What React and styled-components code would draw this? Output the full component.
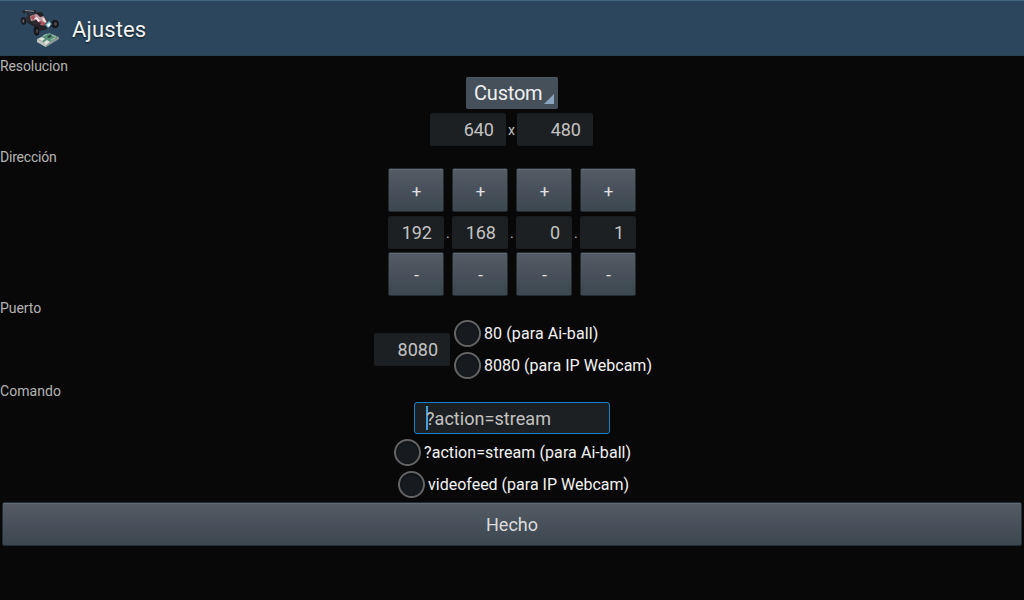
import React from 'react';
import styled, { createGlobalStyle } from 'styled-components';

const Global = createGlobalStyle`
  * { box-sizing: border-box; }
  body { margin: 0; background: #080808; font-family: Roboto, sans-serif; overflow: hidden; }
`;

const Screen = styled.div`
  display: flex;
  flex-direction: column;
  width: 1024px;
  height: 600px;
  background: #080808;
  color: #bebebe;
`;

const ActionBar = styled.header`
  display: flex;
  align-items: flex-start;
  height: 56px;
  padding: 2px 0 0 16px;
  background: #2c475d;
  border-top: 1px solid #436782;
  border-bottom: 1px solid #294355;
`;

const Title = styled.h1`
  margin: 13px 0 0 8px;
  font-size: 22px;
  line-height: 28px;
  font-weight: 400;
  letter-spacing: 0.15px;
  color: #f3f3f3;
  text-shadow: 0 1px 2px #0a141c;
`;

const Section = styled.section`
  display: flex;
  flex-direction: column;
  align-items: center;
  height: ${(p) => p.$height}px;
`;

const Label = styled.h2`
  align-self: flex-start;
  margin: 0;
  height: 19px;
  font-size: 14px;
  line-height: 20px;
  font-weight: 400;
  letter-spacing: ${(p) => p.$spacing || 0}px;
  color: #b4b4b4;
`;

const Spinner = styled.button`
  display: flex;
  align-items: center;
  justify-content: space-between;
  width: 92px;
  height: 32px;
  margin: 2px 0 4px;
  padding: 0 4px 0 8px;
  border: 1px solid #505a64;
  border-width: 1px 0 0;
  border-radius: 2px;
  background: #46505a;
  color: #f0f0f0;
  font: 400 20px/30px Roboto, sans-serif;
`;

const SpinnerText = styled.span`
  letter-spacing: -0.2px;
  padding-bottom: 2px;
  line-height: 28px;
`;

const Corner = styled.svg`
  align-self: flex-end;
  margin-bottom: 5px;
  flex: none;
`;

const Row = styled.div`
  display: flex;
  align-items: center;
  width: 164px;
`;

const Field = styled.div`
  flex: none;
  width: ${(p) => p.$width}px;
  height: 33px;
  padding-right: 12px;
  border-radius: 2px;
  background: #1d2022;
  border: 1px solid #191c1e;
  border-width: 1px 0;
  color: #c3c3c3;
  font-size: 18px;
  line-height: 32px;
  text-align: right;
`;

const Times = styled.span`
  width: 11px;
  font-size: 14px;
  line-height: 20px;
  text-align: center;
`;

const Address = styled.div`
  display: flex;
  margin-top: 2px;
`;

const Octet = styled.div`
  display: flex;
  flex-direction: column;
  width: 56px;
`;

const Dot = styled.span`
  width: 8px;
  padding: 55px 0 0 2px;
  font-size: 14px;
  line-height: 20px;
`;

const Button = styled.button`
  height: 44px;
  margin: 0;
  padding: 2px 0 0;
  border: 1px solid #242c34;
  border-radius: 2px;
  background: linear-gradient(#545b66, #3c474f);
  box-shadow: inset 0 1px 0 #626a73;
  color: #dcdcdc;
  font: 400 18px/40px Roboto, sans-serif;
`;

const StepButton = styled(Button)`
  color: #e2e2e2;
  font-size: 17px;
  padding-left: 1px;
`;

const OctetField = styled(Field)`
  margin: 4px 0 3px;
`;

const PortRow = styled.div`
  display: flex;
  align-items: center;
  gap: 4px;
  height: 64px;
  width: 276px;
`;

const Radios = styled.div`
  display: flex;
  flex-direction: column;
`;

const RadioRow = styled.label`
  display: flex;
  align-items: center;
  height: 32px;
  width: ${(p) => (p.$width ? `${p.$width}px` : 'auto')};
  padding-top: 1px;
  gap: 3px;
  font-size: 16px;
  line-height: 30px;
  letter-spacing: ${(p) => p.$spacing || 0}px;
  color: #f3f3f3;
  white-space: nowrap;
`;

const RadioText = styled.span`
  padding-top: 1px;
`;

const Circle = styled.span`
  flex: none;
  width: 27px;
  height: 27px;
  border: 2px solid #646464;
  border-radius: 50%;
  background: #171b20;
  box-shadow: inset 0 1px 2px #0a0c0f;
`;

const CommandInput = styled.div`
  display: flex;
  align-items: center;
  width: 196px;
  height: 32px;
  margin: 2px 0;
  padding-left: 11px;
  border: 1px solid #1683d0;
  border-radius: 3px;
  background: #1d2022;
  color: #c3c3c3;
  font-size: 18px;
  line-height: 28px;
`;

const CommandText = styled.span`
  padding-top: 2px;
  letter-spacing: 0.05px;
`;

const Caret = styled.span`
  width: 2px;
  height: 24px;
  margin: 0 -2px 0 0;
  background: #459fdf;
`;

const Done = styled(Button)`
  margin: 2px 2px 0;
`;

function AppIcon() {
  return (
    <svg width="48" height="48" viewBox="0 0 48 48" aria-hidden="true">
      <path d="M6 8l3-1 8 1 1-1 2 0 0 3-2 0-8-1-2 2z" fill="#22262e" />
      <path d="M9 7.5l9 .8" stroke="#8f8f94" strokeWidth="1" />
      <path d="M11 9l2 0 1 6-2 0z" fill="#2a2730" />
      <ellipse cx="7.5" cy="18" rx="2.7" ry="3.8" fill="#191a20" transform="rotate(-12 7.5 18)" />
      <ellipse cx="7.3" cy="18" rx="1" ry="1.7" fill="#6b626a" />
      <path d="M9 15l6-4 8-2 5 4 4 6-4 6-6 1-10-6z" fill="#302b31" />
      <path d="M14 13l6-2 7 1 4 7-5 4-6-6-5 1z" fill="#b9989e" />
      <path d="M14 14l4-2 2 3-3 2zM22 18l4 0 4 3-3 2z" fill="#a8525a" />
      <path d="M20 10l6-1 2 4-4 1z" fill="#241f27" />
      <path d="M18 15l3-1 3 4-2 1zM26 15l2 0 2 4-2 0z" fill="#f6e6e8" />
      <path d="M20 16l2 3 3 1-1 2-5-4z" fill="#38252e" />
      <path d="M11 18l8 5 7 2 8-2 5-2" fill="none" stroke="#20232b" strokeWidth="1.8" />
      <path d="M18 21l6 1 5 1 3-2-1 5-6 2-6-2z" fill="#242129" />
      <ellipse cx="20.5" cy="28" rx="2.8" ry="4.5" fill="#15161b" transform="rotate(-8 20.5 28)" />
      <ellipse cx="21" cy="28" rx="1" ry="2" fill="#504b50" />
      <ellipse cx="39" cy="21" rx="4" ry="4.3" fill="#17191e" />
      <ellipse cx="39.5" cy="21" rx="1.4" ry="1.8" fill="#555056" />
      <path d="M29 22l4-4 3 3-4 4z" fill="#69aabd" />
      <path d="M31 21l3-1 0 3-2 1z" fill="#edf3f4" />
      <path d="M21 36l12-6 10 4v2l-13 8-9-5z" fill="#8c9996" />
      <path d="M24 35l9-5 9 4-12 7z" fill="#588f79" />
      <path d="M21 36l9 5v3l-9-5z" fill="#bfc6c1" />
      <path d="M22 36l4-2 3 2-3 2zM28 39l3-2 3 2-4 3z" fill="#dee2dc" />
      <path d="M31 34l3-2 2 1-3 2z" fill="#263b38" />
      <path d="M27 33l4-2M36 32l4 2M35 37l4-2" stroke="#a6c8ac" strokeWidth="1" />
    </svg>
  );
}

function Radio({ children, spacing, width }) {
  return (
    <RadioRow $spacing={spacing} $width={width}>
      <Circle />
      <RadioText>{children}</RadioText>
    </RadioRow>
  );
}

const octets = ['192', '168', '0', '1'];

export default function App() {
  return (
    <Screen>
      <Global />
      <ActionBar>
        <AppIcon />
        <Title>Ajustes</Title>
      </ActionBar>
      <Section $height={91}>
        <Label $spacing={-0.1}>Resolucion</Label>
        <Spinner>
          <SpinnerText>Custom</SpinnerText>
          <Corner width="10" height="10" viewBox="0 0 10 10">
            <path d="M10 0v10H0z" fill="#8ba5c1" />
          </Corner>
        </Spinner>
        <Row>
          <Field $width={76}>640</Field>
          <Times>x</Times>
          <Field $width={76}>480</Field>
        </Row>
      </Section>
      <Section $height={151}>
        <Label $spacing={-0.2}>Dirección</Label>
        <Address>
          {octets.map((value, i) => (
            <React.Fragment key={i}>
              <Octet>
                <StepButton>+</StepButton>
                <OctetField $width={56}>{value}</OctetField>
                <StepButton>-</StepButton>
              </Octet>
              {i < 3 && <Dot>.</Dot>}
            </React.Fragment>
          ))}
        </Address>
      </Section>
      <Section $height={83}>
        <Label $spacing={-0.05}>Puerto</Label>
        <PortRow>
          <Field $width={76}>8080</Field>
          <Radios>
            <Radio spacing={0.1}>80 (para Ai-ball)</Radio>
            <Radio spacing={0.03}>8080 (para IP Webcam)</Radio>
          </Radios>
        </PortRow>
      </Section>
      <Section $height={119}>
        <Label $spacing={0.05}>Comando</Label>
        <CommandInput>
          <Caret />
          <CommandText>?action=stream</CommandText>
        </CommandInput>
        <Radio spacing={0.07} width={236}>?action=stream (para Ai-ball)</Radio>
        <Radio width={228}>videofeed (para IP Webcam)</Radio>
      </Section>
      <Done>Hecho</Done>
    </Screen>
  );
}
